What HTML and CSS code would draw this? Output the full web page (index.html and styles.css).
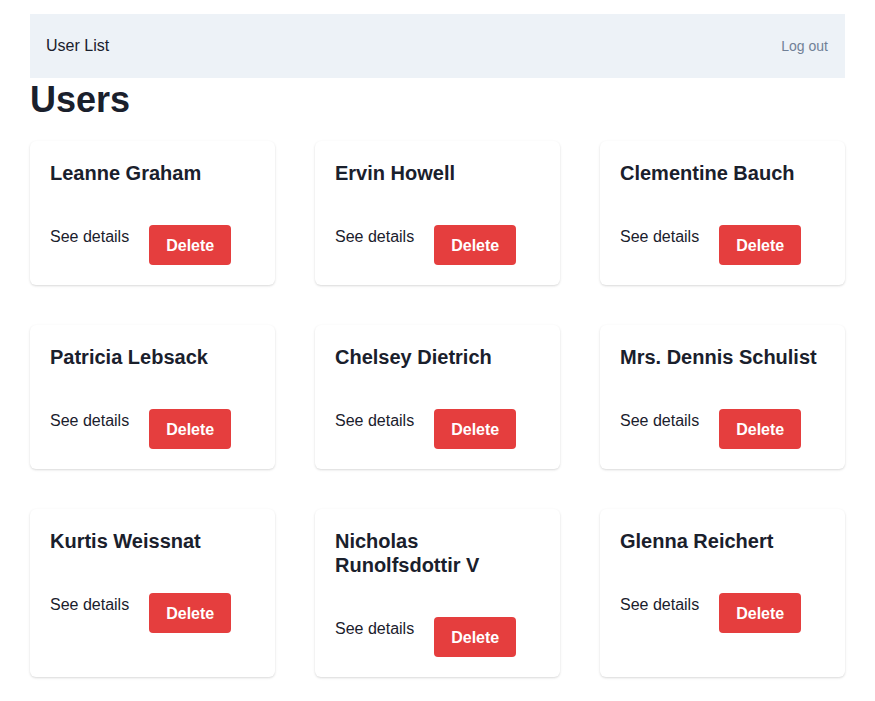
FILE: index.html
```html
<!DOCTYPE html>
<html lang="en">
<head>
<meta charset="utf-8">
<title>User List</title>
<link rel="stylesheet" href="styles.css">
</head>
<body>
<div class="page">
  <header class="topbar">
    <span class="brand">User List</span>
    <a class="logout" href="#">Log out</a>
  </header>
  <h1 class="title">Users</h1>
  <div class="grid">
    <div class="card"><h2 class="name">Leanne Graham</h2><div class="actions"><a class="details" href="#">See details</a><button class="delete">Delete</button></div></div>
    <div class="card"><h2 class="name">Ervin Howell</h2><div class="actions"><a class="details" href="#">See details</a><button class="delete">Delete</button></div></div>
    <div class="card"><h2 class="name">Clementine Bauch</h2><div class="actions"><a class="details" href="#">See details</a><button class="delete">Delete</button></div></div>
    <div class="card"><h2 class="name">Patricia Lebsack</h2><div class="actions"><a class="details" href="#">See details</a><button class="delete">Delete</button></div></div>
    <div class="card"><h2 class="name">Chelsey Dietrich</h2><div class="actions"><a class="details" href="#">See details</a><button class="delete">Delete</button></div></div>
    <div class="card"><h2 class="name">Mrs. Dennis Schulist</h2><div class="actions"><a class="details" href="#">See details</a><button class="delete">Delete</button></div></div>
    <div class="card"><h2 class="name">Kurtis Weissnat</h2><div class="actions"><a class="details" href="#">See details</a><button class="delete">Delete</button></div></div>
    <div class="card"><h2 class="name">Nicholas Runolfsdottir V</h2><div class="actions"><a class="details" href="#">See details</a><button class="delete">Delete</button></div></div>
    <div class="card"><h2 class="name">Glenna Reichert</h2><div class="actions"><a class="details" href="#">See details</a><button class="delete">Delete</button></div></div>
  </div>
</div>
</body>
</html>
```
FILE: styles.css
```css
* { box-sizing: border-box; }
html, body { margin: 0; background: #fff; }
body {
  font-family: "Liberation Sans", Arial, sans-serif;
  color: #1a202c;
  font-size: 16px;
  line-height: 24px;
}
.page {
  padding: 14px 30px 24px;
}
.topbar {
  height: 64px;
  background: #edf2f7;
  display: flex;
  align-items: center;
  justify-content: space-between;
  padding: 0 17px 0 16px;
}
.brand { font-size: 16px; color: #1a202c; }
.logout {
  font-size: 14px;
  color: #718096;
  text-decoration: none;
}
.title {
  margin: 0 0 19px;
  font-size: 36px;
  line-height: 44px;
  font-weight: 700;
}
.grid {
  display: grid;
  grid-template-columns: repeat(3, 1fr);
  gap: 40px;
}
.card {
  background: #fff;
  border-radius: 6px;
  box-shadow: 0 1px 3px rgba(0,0,0,0.1), 0 1px 2px rgba(0,0,0,0.06);
  padding: 20px;
}
.name {
  margin: 0 0 40px;
  font-size: 20px;
  line-height: 24px;
  font-weight: 700;
}
.actions {
  display: flex;
  align-items: flex-start;
  gap: 20px;
}
.details {
  color: #1a202c;
  text-decoration: none;
  font-size: 16px;
  line-height: 24px;
}
.delete {
  font-family: inherit;
  font-size: 16px;
  line-height: 24px;
  font-weight: 700;
  color: #fff;
  background: #e53e3e;
  border: 0;
  border-radius: 4px;
  padding: 9px 17px 7px;
  cursor: pointer;
}
```
